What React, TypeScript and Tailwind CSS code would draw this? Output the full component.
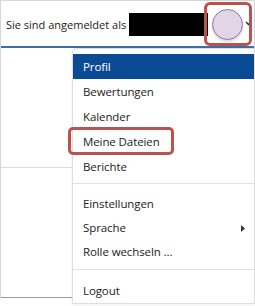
import React from 'react'

const font = { fontFamily: '"Open Sans", "Noto Sans", sans-serif' }

const top = ['Bewertungen', 'Kalender', 'Meine Dateien', 'Berichte']
const mid = ['Einstellungen', 'Sprache', 'Rolle wechseln ...']

export default function App() {
  return (
    <div className="relative w-[255px] h-[306px] bg-white overflow-hidden text-[#222]" style={font}>
      {/* page behind the menu */}
      <div className="border-l border-r border-t border-[#d6d6d6] h-[298px] flex flex-col">
        <div className="h-[45px] flex items-center pl-[5px] pt-[2px]">
          <span className="w-[123px] shrink-0 whitespace-nowrap text-[11px] leading-none">Sie sind angemeldet als</span>
          <div className="shrink-0 w-[79px] h-[23px] bg-black" />
          <div className="shrink-0 ml-[4px] w-[31px] h-[31px] rounded-full bg-[#e1d5e7] border border-[#9673a6] shadow-[0_2px_2px_rgba(0,0,0,0.12)]" />
          <svg width="7" height="5" viewBox="0 0 7 5" className="shrink-0 ml-[2px] mb-[2px]">
            <path d="M1 1 L3.5 3.5 L6 1" fill="none" stroke="#1f2a44" strokeWidth="1.4" />
          </svg>
        </div>
        <div className="h-[2px] bg-[#3d6fa6]" />
        <div className="h-[120px] border-b border-[#dcdcdc]" />
        <div className="flex-1 border-b border-[#9a9a9a]" />
      </div>

      {/* avatar highlight */}
      <div className="absolute left-[204px] top-[2px] w-[48px] h-[44px] rounded-[6px] border-[3px] border-[#b85450]" />

      {/* dropdown */}
      <div className="absolute left-[72px] top-[48px] w-[183px] h-[256px] bg-white border border-[#dedede] rounded-tl-[4px] shadow-[0_1px_3px_rgba(0,0,0,0.08)] pt-[5px] text-[11.5px] tracking-[-0.1px]">
        <div className="h-[25px] bg-[#0b4b96] text-white flex items-center pl-[10px]">Profil</div>
        {top.map((t) => (
          <div key={t} className="h-[25px] flex items-center pl-[10px]">{t}</div>
        ))}
        <div className="mt-[4px] mb-[8px] h-px bg-[#e2e2e2]" />
        {mid.map((t) => (
          <div key={t} className="h-[24px] flex items-center pl-[10px] pr-[9px] justify-between">
            <span>{t}</span>
            {t === 'Sprache' && (
              <svg width="4" height="7" viewBox="0 0 4 7">
                <path d="M0 0 L4 3.5 L0 7 Z" fill="#333" />
              </svg>
            )}
          </div>
        ))}
        <div className="mt-[5px] mb-[9px] h-px bg-[#e2e2e2]" />
        <div className="h-[24px] flex items-center pl-[10px]">Logout</div>
      </div>

      {/* item highlight */}
      <div className="absolute left-[68px] top-[127px] w-[106px] h-[28px] rounded-[5px] border-[3px] border-[#b85450]" />
    </div>
  )
}
